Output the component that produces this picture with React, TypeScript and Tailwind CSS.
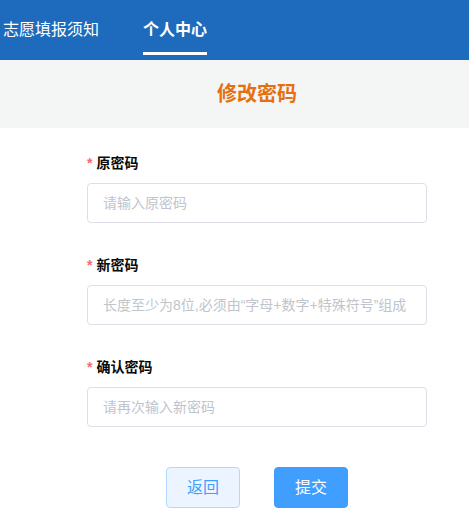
import { useState } from "react";

const fields = [
  { label: "原密码", placeholder: "请输入原密码" },
  { label: "新密码", placeholder: "长度至少为8位,必须由“字母+数字+特殊符号”组成" },
  { label: "确认密码", placeholder: "请再次输入新密码" },
];

const App = () => {
  const [values, setValues] = useState(["", "", ""]);

  return (
    <div className="min-h-screen bg-white font-['Liberation_Sans','Noto_Sans_CJK_SC',sans-serif]">
      <header className="flex h-[60px] items-stretch bg-[#1e6bbd] pl-[3px] text-[16px] text-white">
        <div className="flex items-center">志愿填报须知</div>
        <div className="relative ml-[44px] flex items-center font-bold">
          个人中心
          <span className="absolute bottom-[5px] left-0 right-0 h-[3px] bg-white" />
        </div>
      </header>

      <div className="flex h-[68px] items-center justify-center bg-[#f4f5f5] pl-[45px]">
        <h1 className="text-[20px] font-bold text-[#e5700f]">修改密码</h1>
      </div>

      <form className="ml-[87px] w-[340px] pt-[23px]" onSubmit={(e) => e.preventDefault()}>
        {fields.map((f, i) => (
          <div key={f.label} className="mb-[30px]">
            <label className="flex h-[24px] items-center text-[14px] font-bold text-[#0a0a0a]">
              <span className="mr-[4px] text-[#f56c6c]">*</span>
              {f.label}
            </label>
            <input
              type="password"
              value={values[i]}
              onChange={(e) => {
                const next = [...values];
                next[i] = e.target.value;
                setValues(next);
              }}
              placeholder={f.placeholder}
              className="mt-[8px] h-[40px] w-full rounded-[4px] border border-[#dcdfe6] bg-white px-[15px] text-[14px] text-[#606266] outline-none placeholder:text-[#c0c4cc] focus:border-[#409eff]"
            />
          </div>
        ))}

        <div className="mt-[40px] flex justify-center gap-[34px]">
          <button
            type="button"
            className="h-[41px] w-[74px] rounded-[4px] border border-[#b3d8ff] bg-[#ecf5ff] text-[16px] text-[#409eff]"
          >
            返回
          </button>
          <button
            type="submit"
            className="h-[41px] w-[74px] rounded-[4px] border border-[#409eff] bg-[#409eff] text-[16px] text-white"
          >
            提交
          </button>
        </div>
      </form>
    </div>
  );
};

export default App;
